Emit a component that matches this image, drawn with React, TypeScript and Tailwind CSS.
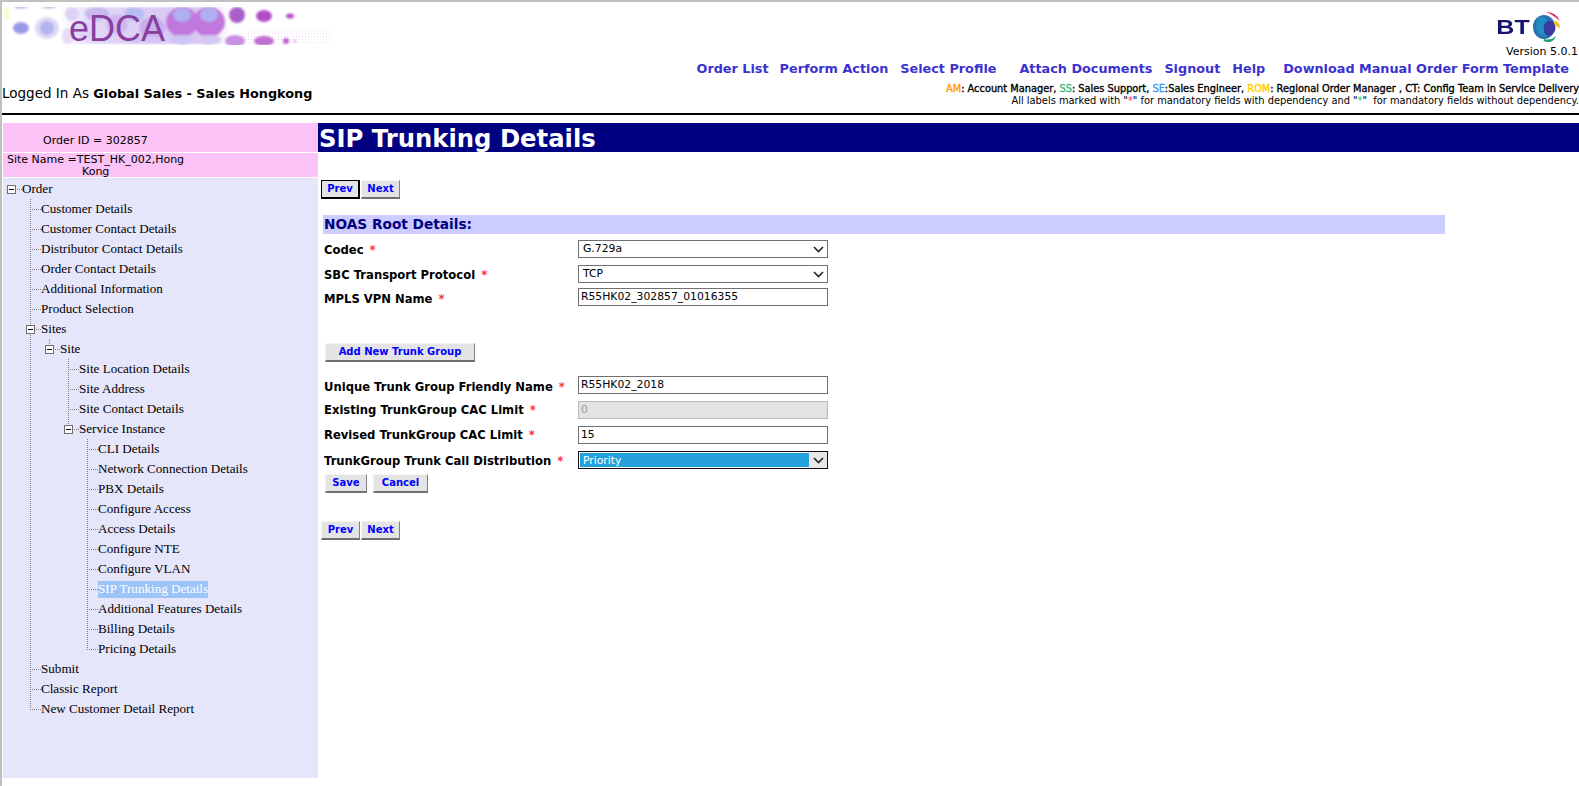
const font = "font-['DejaVu_Sans',Verdana,sans-serif]";

type Row = { label: string; cells: string; selected?: boolean };

const rows: Row[] = [
  { label: 'Order', cells: 'm' },
  { label: 'Customer Details', cells: ' T' },
  { label: 'Customer Contact Details', cells: ' T' },
  { label: 'Distributor Contact Details', cells: ' T' },
  { label: 'Order Contact Details', cells: ' T' },
  { label: 'Additional Information', cells: ' T' },
  { label: 'Product Selection', cells: ' T' },
  { label: 'Sites', cells: ' B' },
  { label: 'Site', cells: ' |E' },
  { label: 'Site Location Details', cells: ' | T' },
  { label: 'Site Address', cells: ' | T' },
  { label: 'Site Contact Details', cells: ' | T' },
  { label: 'Service Instance', cells: ' | E' },
  { label: 'CLI Details', cells: ' |  T' },
  { label: 'Network Connection Details', cells: ' |  T' },
  { label: 'PBX Details', cells: ' |  T' },
  { label: 'Configure Access', cells: ' |  T' },
  { label: 'Access Details', cells: ' |  T' },
  { label: 'Configure NTE', cells: ' |  T' },
  { label: 'Configure VLAN', cells: ' |  T' },
  { label: 'SIP Trunking Details', cells: ' |  T', selected: true },
  { label: 'Additional Features Details', cells: ' |  T' },
  { label: 'Billing Details', cells: ' |  T' },
  { label: 'Pricing Details', cells: ' |  L' },
  { label: 'Submit', cells: ' T' },
  { label: 'Classic Report', cells: ' T' },
  { label: 'New Customer Detail Report', cells: ' L' },
];

function TreeCell({ kind }: { kind: string }) {
  const isBox = kind === 'm' || kind === 'B' || kind === 'E';
  const up = kind === '|' || kind === 'T' || kind === 'L' || kind === 'B' || kind === 'E';
  const down = kind === '|' || kind === 'T' || kind === 'B';
  const right = kind === 'T' || kind === 'L' || isBox;
  return (
    <svg width="19" height="20" className="shrink-0 block">
      <g stroke="#808080" strokeDasharray="1 1" fill="none">
        {up && <path d="M8.5 0V10" />}
        {down && <path d="M8.5 10V20" />}
        {right && <path d="M8 10.5H19" />}
      </g>
      {isBox && (
        <g>
          <rect x="4.5" y="6.5" width="8" height="8" fill="#fff" stroke="#6e6e6e" />
          <path d="M6 10.5H11" stroke="#000" />
        </g>
      )}
    </svg>
  );
}

function EdcaLogo() {
  const blobs: [number, number, number, number, string][] = [
    [19, 7, 7, 1.5, '#b4b0ee'], [47, 7, 7, 1.5, '#b4b0ee'],
    [19, 28, 8, 6, '#9a9aea'], [45, 28, 12, 11, '#dcdaf6'], [45, 28, 7, 7, '#b4b4ee'],
    [70, 14, 7, 7, '#dcd2f6'], [66, 36, 6, 8, '#e4dcf8'], [82, 30, 10, 9, '#e0d4f6'],
    [95, 14, 12, 7, '#c8b8f0'], [115, 24, 11, 10, '#d0b8ee'], [132, 14, 10, 7, '#b8bcf2'],
    [150, 28, 13, 11, '#c8aeec'], [142, 40, 20, 4, '#d4c4f4'],
    [180, 22, 16, 15, '#c078dc'], [207, 22, 16, 15, '#c078dc'],
    [180, 15, 9, 7, '#aeb0f2'], [207, 15, 9, 7, '#aeb0f2'],
    [180, 40, 12, 5, '#ccc4f4'], [207, 40, 12, 5, '#d4c8f4'],
    [235, 15, 8, 8, '#a860c8'], [233, 41, 10, 6, '#c890e0'],
    [262, 16, 8, 6, '#b050c8'], [262, 41, 10, 5, '#c070d0'], [288, 16, 4, 2.5, '#b050c8'],
    [284, 41, 3, 3, '#c060d0'], [293, 41, 1.5, 1.5, '#d8a0e0'],
  ];
  return (
    <div className="relative w-[340px] h-[38px] mt-[5px]">
      <svg width="340" height="38" viewBox="0 7 340 38" className="block">
        <defs>
          <linearGradient id="band" x1="0" x2="1" y1="0" y2="0">
            <stop offset="0" stopColor="#e6def8" stopOpacity="0" />
            <stop offset="0.18" stopColor="#e2d8f8" />
            <stop offset="0.8" stopColor="#d8c4f2" />
            <stop offset="1" stopColor="#d8c4f2" stopOpacity="0" />
          </linearGradient>
          <pattern id="dots" width="3" height="3" patternUnits="userSpaceOnUse">
            <rect width="1" height="1" fill="#f2dcf2" />
          </pattern>
          <filter id="soft">
            <feGaussianBlur stdDeviation="0.8" />
          </filter>
        </defs>
        <rect x="2" y="7" width="6" height="13" fill="#fdfcd8" />
        <rect x="240" y="28" width="90" height="16" fill="url(#dots)" />
        <g filter="url(#soft)">
          <rect x="58" y="7" width="170" height="37" fill="url(#band)" />
          {blobs.map(([cx, cy, rx, ry, c], i) => (
            <ellipse key={i} cx={cx} cy={cy} rx={rx} ry={ry} fill={c} />
          ))}
        </g>
      </svg>
      <span className="absolute left-[67px] top-[3px] font-['Liberation_Sans',Arial,sans-serif] text-[36px] leading-[38px] text-[#8a3f9f]">
        eDCA
      </span>
    </div>
  );
}

function BtLogo() {
  return (
    <div className="flex items-center h-[34px] mr-[17px]">
      <span className="font-['Liberation_Sans',Arial,sans-serif] font-bold text-[20px] leading-none text-[#14146e] scale-x-125 origin-right mr-[2px]">
        BT
      </span>
      <svg width="30" height="34" viewBox="0 0 30 34" className="block">
        <ellipse cx="12" cy="17" rx="11" ry="12" fill="#2a6fb0" />
        <path d="M6 8q7-3 10 4t-2 14q-7 1-9-5t1-13z" fill="#1f8fc0" />
        <path d="M14 12q7-3 9 3t-4 10q-6 2-7-4t2-9z" fill="#3a3aa0" />
        <path d="M12 29q7 2 12-3-2 6-8 6t-4-3z" fill="#1aa070" />
        <path d="M14 2q10 0 14 9-5-4-8-6t-6-3z" fill="#d83060" />
        <path d="M22 11q6 0 6 7-3-1-5-3t-1-4z" fill="#f0c020" />
      </svg>
    </div>
  );
}

function TopLink({ children, className = '' }: { children: string; className?: string }) {
  return <a className={`font-bold text-[#3a32d0] ${className}`}>{children}</a>;
}

function Header() {
  return (
    <header className="flex justify-between h-[113px] border-b-2 border-black">
      <div className="flex flex-col">
        <EdcaLogo />
        <p className="mt-[40px] text-[13.5px] leading-4 text-black whitespace-nowrap">
          Logged In As <b className="text-[12.8px]">Global Sales - Sales Hongkong</b>
        </p>
      </div>
      <div className="flex flex-col items-end text-right">
        <div className="mt-[8px]"><BtLogo /></div>
        <p className="text-[11px] leading-[14px] mt-px mr-[1px] text-black whitespace-nowrap">Version 5.0.1</p>
        <nav className="flex text-[12.8px] leading-4 mt-[2px] mr-[10px] whitespace-nowrap">
          <TopLink>Order List</TopLink>
          <TopLink className="ml-[11px]">Perform Action</TopLink>
          <TopLink className="ml-[12px]">Select Profile</TopLink>
          <TopLink className="ml-[23px]">Attach Documents</TopLink>
          <TopLink className="ml-[12px]">Signout</TopLink>
          <TopLink className="ml-[12px]">Help</TopLink>
          <TopLink className="ml-[18px]">Download Manual Order Form Template</TopLink>
        </nav>
        <p className="text-[9.8px] leading-[13px] mt-[5px] [-webkit-text-stroke-width:0.35px] whitespace-nowrap text-black">
          <span className="text-[#ff9900]">AM</span>: Account Manager, <span className="text-[#33bb77]">SS</span>: Sales Support, <span className="text-[#3399ff]">SE</span>:Sales Engineer, <span className="text-[#ffcc00]">ROM</span>: Regional Order Manager , CT: Config Team in Service Delivery
        </p>
        <p className="text-[9.85px] leading-[12px] whitespace-nowrap text-black">
          All labels marked with "<span className="text-[#ff3333]">*</span>" for mandatory fields with dependency and "<span className="text-[#33bb33]">*</span>"&nbsp; for mandatory fields without dependency.
        </p>
      </div>
    </header>
  );
}

function Sidebar() {
  return (
    <aside className="w-[315px] shrink-0 ml-px">
      <div className="h-[29px] bg-[#fbc2f6] flex items-center pl-[40px] pt-[8px] text-[11px] text-black">Order ID = 302857</div>
      <div className="h-[24px] mt-px bg-[#fbc2f6] text-[11px] leading-3 text-black pl-[4px] pt-[1px]">
        <div>Site Name =TEST_HK_002,Hong</div>
        <div className="pl-[75px]">Kong</div>
      </div>
      <div className="mt-px h-[600px] bg-[#e6e6fa] pt-[1px] font-['Liberation_Serif','Times_New_Roman',serif] text-[13.1px] leading-5 text-black">
        {rows.map((r) => (
          <div key={r.label} className="flex h-5 whitespace-nowrap">
            {r.cells.split('').map((c, i) => (
              <TreeCell key={i} kind={c} />
            ))}
            <span className={r.selected ? 'bg-[#9cc4f8] text-white h-[17px] leading-4 mt-[2px]' : ''}>{r.label}</span>
          </div>
        ))}
      </div>
    </aside>
  );
}

function Btn({ children, className = '' }: { children: string; className?: string }) {
  return (
    <button
      type="button"
      className={`h-[19px] bg-[#e4e4e4] border border-t-[#f4f4f4] border-l-[#f4f4f4] border-r-[#808080] border-b-2 border-b-[#707070] text-[10px] leading-none font-bold text-[#0000ff] ${className}`}
    >
      {children}
    </button>
  );
}

function Field({ label, className = '', labelClass = '', children }: { label: string; className?: string; labelClass?: string; children: React.ReactNode }) {
  return (
    <div className={`flex items-center h-[18px] ${className}`}>
      <label className={`w-[260px] shrink-0 pl-[6px] text-[11.6px] font-bold text-black whitespace-nowrap ${labelClass}`}>
        {label} <span className="text-[#ff3333] ml-[2px]">*</span>
      </label>
      {children}
    </div>
  );
}

function Chevron() {
  return (
    <svg width="11" height="7" viewBox="0 0 11 7" className="block">
      <path d="M1 1 5.5 5.5 10 1" fill="none" stroke="#222" strokeWidth="1.6" />
    </svg>
  );
}

function FakeSelect({ value }: { value: string }) {
  return (
    <div className="w-[250px] h-[18px] border border-[#707070] bg-white flex items-center justify-between pl-[4px] pr-[3px] text-[10.8px] text-black">
      <span>{value}</span>
      <Chevron />
    </div>
  );
}

function FakeInput({ value, disabled }: { value: string; disabled?: boolean }) {
  return (
    <div
      className={`w-[250px] h-[18px] border flex items-center pl-[2px] text-[10.8px] ${
        disabled ? 'border-[#b8b8b8] bg-[#e3e3e3] text-[#9a9a9a]' : 'border-[#707070] bg-white text-black'
      }`}
    >
      {value}
    </div>
  );
}

function Main() {
  return (
    <main className="flex-1 min-w-0">
      <h1 className="h-[29px] pl-px bg-[#000080] text-white text-[24.3px] leading-[32px] font-bold whitespace-nowrap">SIP Trunking Details</h1>
      <div className="flex mt-[28px] pl-[3px]">
        <Btn className="w-[39px] !border-black !border-r-2 !border-b-2">Prev</Btn>
        <Btn className="w-[39px] ml-px">Next</Btn>
      </div>
      <h2 className="mt-[16px] ml-[5px] w-[1122px] h-[19px] bg-[#ccccff] text-[13.7px] leading-[19px] font-bold text-[#000080] pl-[1px]">NOAS Root Details:</h2>
      <Field label="Codec" className="mt-[6px]" labelClass="pt-[4px]"><FakeSelect value="G.729a" /></Field>
      <Field label="SBC Transport Protocol" className="mt-[7px]" labelClass="pt-[4px]"><FakeSelect value="TCP" /></Field>
      <Field label="MPLS VPN Name" className="mt-[5px]" labelClass="pt-[6px]"><FakeInput value="R55HK02_302857_01016355" /></Field>
      <Btn className="w-[150px] ml-[7px] mt-[37px] block">Add New Trunk Group</Btn>
      <Field label="Unique Trunk Group Friendly Name" className="mt-[14px]" labelClass="pt-[6px]"><FakeInput value="R55HK02_2018" /></Field>
      <Field label="Existing TrunkGroup CAC Limit" className="mt-[7px]" labelClass="pt-[2px]"><FakeInput value="0" disabled /></Field>
      <Field label="Revised TrunkGroup CAC Limit" className="mt-[7px]" labelClass="pt-[2px]"><FakeInput value="15" /></Field>
      <Field label="TrunkGroup Trunk Call Distribution" className="mt-[7px]" labelClass="pt-[4px]">
        <div className="w-[250px] h-[18px] border border-[#111] bg-white flex items-stretch text-[10.8px]">
          <span className="flex-1 m-px mr-0 bg-[#26a0da] text-white pl-[3px] leading-[15px]">Priority</span>
          <span className="w-[18px] bg-[#e8e8e8] flex items-center justify-center"><Chevron /></span>
        </div>
      </Field>
      <div className="flex mt-[5px] pl-[7px] gap-[6px]">
        <Btn className="w-[42px]">Save</Btn>
        <Btn className="w-[55px]">Cancel</Btn>
      </div>
      <div className="flex mt-[28px] pl-[3px] gap-px">
        <Btn className="w-[39px]">Prev</Btn>
        <Btn className="w-[39px]">Next</Btn>
      </div>
    </main>
  );
}

export default function App() {
  return (
    <div className={`w-[1579px] h-[786px] overflow-hidden bg-white border-t-2 border-l-2 border-[#c0c0c0] ${font}`}>
      <Header />
      <div className="flex mt-[8px]">
        <Sidebar />
        <Main />
      </div>
    </div>
  );
}
